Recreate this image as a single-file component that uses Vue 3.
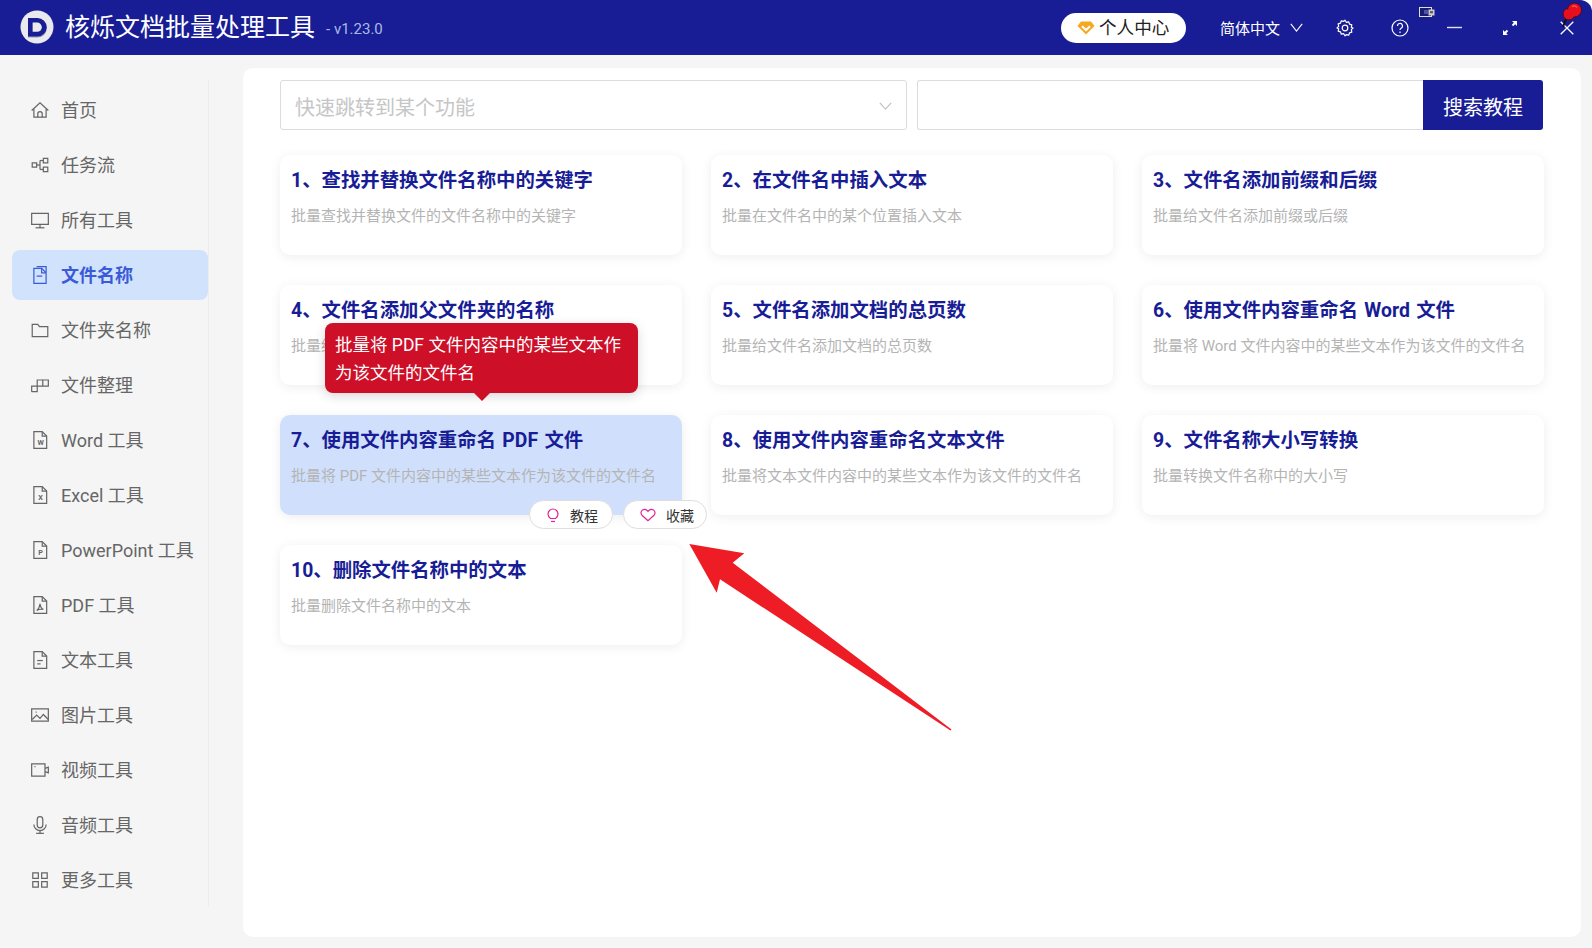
<template>
  <div class="app">
    <header class="topbar">
      <div class="logo">
        <svg viewBox="0 0 34 34" width="34" height="34">
          <circle cx="17" cy="17" r="16.500" fill="#e9e9ee" />
          <path d="M8 8h9.500a9.200 9.200 0 0 1 0 18.400H8z" fill="#9a9ab0" transform="translate(0 1.200)" />
          <path d="M8 8h9.500a9.200 9.200 0 0 1 0 18.400H8z" fill="#181d96" />
          <path d="M12.600 12.600h4.600a4.600 4.600 0 0 1 0 9.200h-4.600z" fill="#e9e9ee" />
        </svg>
      </div>
      <span class="app-name">核烁文档批量处理工具</span>
      <span class="version">- v1.23.0</span>

      <div class="topbar-right">
        <button class="user-btn">
          <svg viewBox="0 0 18 14" width="18" height="14">
            <path d="M4 .5h10L17.500 5 9 13.500.5 5z" fill="#f7a823" />
            <path d="M5 5.200 9 9l4-3.800" fill="none" stroke="#fff" stroke-width="2" />
          </svg>
          <span class="user-text">个人中心</span>
        </button>
        <span class="lang">简体中文</span>
        <svg class="lang-arrow" viewBox="0 0 13 9" width="13" height="9">
          <path d="M.8.8 6.500 8 12.200.8" fill="none" stroke="#fff" stroke-width="1.100" />
        </svg>
        <svg class="tool-icon gear" viewBox="0 0 18 18" width="18" height="18" fill="none" stroke="#fff" stroke-width="1.200">
          <path d="M9 1.200l1.300 2.100 2.400-.5.8 2.300 2.300.8-.5 2.400L17 9l-1.700 1.700.5 2.400-2.300.8-.8 2.300-2.400-.5L9 16.800l-1.300-2.100-2.400.5-.8-2.300-2.300-.8.5-2.400L1 9l1.700-1.700-.5-2.400 2.300-.8.8-2.300 2.400.5z" stroke-linejoin="round" />
          <circle cx="9" cy="9" r="2.800" />
        </svg>
        <svg class="tool-icon help" viewBox="0 0 18 18" width="18" height="18" fill="none" stroke="#fff" stroke-width="1.200">
          <circle cx="9" cy="9" r="8" />
          <path d="M6.500 7a2.500 2.500 0 1 1 3.600 2.200c-.8.4-1.100.9-1.100 1.800" />
          <path d="M9 12.600v1.400" />
        </svg>
        <svg class="win-btn" viewBox="0 0 15 15" width="15" height="15">
          <path d="M0 7.500h15" stroke="#dfe2f5" stroke-width="1.400" />
        </svg>
        <svg class="win-btn expand" viewBox="0 0 14 14" width="14" height="14" fill="#fff">
          <path d="M9 0h5v5l-1.800-1.800-2 2-1.400-1.400 2-2zM5 14H0V9l1.800 1.800 2-2 1.400 1.400-2 2z" />
        </svg>
        <svg class="win-btn close" viewBox="0 0 14 14" width="14" height="14">
          <path d="M.7.7l12.600 12.600M13.300.7.7 13.300" stroke="#fff" stroke-width="1.300" />
        </svg>
      </div>

      <svg class="mini-window" viewBox="0 0 16 10" width="16" height="10">
        <rect x=".5" y=".5" width="12" height="9" fill="#181d70" stroke="#ddd" />
        <path d="M6 3v4M8 3v4" stroke="#8c8cc8" />
        <rect x="9.500" y="2.500" width="6" height="6" fill="#ccc" />
        <rect x="11" y="4.200" width="3" height="2" fill="#555" />
      </svg>
      <svg class="pin" viewBox="0 0 22 28" width="22" height="28">
        <path d="M5 17 2 25" stroke="#111" stroke-width="2" />
        <circle cx="8" cy="12" r="6" fill="#e5101f" stroke="#4a0a24" />
        <circle cx="13.500" cy="8" r="7" fill="#e5101f" stroke="#4a0a24" />
        <circle cx="8.500" cy="12" r="5" fill="#e5101f" />
        <path d="M11 4.500c2-1 4-.5 5 1" fill="none" stroke="#ff5a64" stroke-width="1.200" />
      </svg>
    </header>

    <div class="body">
      <aside class="sidebar">
        <nav class="side-list">
          <a
            v-for="item in menu"
            :key="item.name"
            class="side-item"
            :class="{ active: item.active }"
          >
            <svg class="side-icon" viewBox="0 0 18 18" width="20" height="20" fill="none" stroke="currentColor" stroke-width="1.100">
              <path v-for="d in icons[item.icon]" :key="d" :d="d" />
              <text v-if="item.letter" x="9.500" y="13.700" class="icon-letter">{{ item.letter }}</text>
            </svg>
            <span class="side-name">{{ item.name }}</span>
          </a>
        </nav>
      </aside>

      <main class="panel">
        <div class="search-row">
          <div class="jump-select">
            <span>快速跳转到某个功能</span>
            <svg viewBox="0 0 13 8" width="13" height="8">
              <path d="M.8.8 6.500 7 12.200.8" fill="none" stroke="#bbb" stroke-width="1.100" />
            </svg>
          </div>
          <input class="search-input" />
          <button class="search-btn"><span>搜索教程</span></button>
        </div>

        <div class="card-grid">
          <div
            v-for="(card, idx) in cards"
            :key="card.title"
            class="card"
            :class="{ hovered: idx === hoverIndex }"
          >
            <div class="card-title">{{ idx + 1 }}、{{ card.title }}</div>
            <div v-if="idx !== 3" class="card-desc">{{ card.desc }}</div>
            <div v-else class="card-desc cut">{{ card.desc }}</div>

            <template v-if="idx === hoverIndex">
              <div class="tooltip">{{ card.desc }}</div>
              <div class="card-actions">
                <button class="action-btn">
                  <svg viewBox="0 0 14 16" width="14" height="16" fill="none" stroke="#e0278f" stroke-width="1.200">
                    <path d="M4.500 11.500C3 10.500 2 9 2 7a5 5 0 0 1 10 0c0 2-1 3.500-2.500 4.500z" />
                    <path d="M5 14.500h4" />
                  </svg>
                  教程
                </button>
                <button class="action-btn">
                  <svg viewBox="0 0 16 14" width="16" height="14" fill="none" stroke="#e0278f" stroke-width="1.200">
                    <path d="M8 12.800 2 7.200C.4 5.600.8 3 2.600 2 4.400 1 6.600 1.500 8 3.400 9.400 1.500 11.600 1 13.400 2c1.800 1 2.200 3.600.6 5.200z" />
                  </svg>
                  收藏
                </button>
              </div>
            </template>
          </div>
        </div>
      </main>
    </div>

    <svg class="big-arrow" viewBox="0 0 1592 948" width="1592" height="948">
      <path d="M689.300 544 744.300 553.300 732.700 562.700 951.500 729.500 950.500 730.500 720 579.300 716.700 592.700z" fill="#ee1c25" />
    </svg>
  </div>
</template>

<script setup>
import { ref } from 'vue'

const hoverIndex = ref(6)

const fileOutline = ['M3.500 1.500h7.500l4 4v11h-11.500z', 'M11 1.500v4h4']

const icons = {
  home: ['M1.500 9.500 9 2.500l7.500 7', 'M3.500 8v7.500h11V8', 'M7 15.500V12.500a2 2 0 0 1 4 0v3'],
  flow: ['M2 7h4v4H2z', 'M12 3h4v4h-4z', 'M12 11h4v4h-4z', 'M6 9h3', 'M9 5v8', 'M9 5h3', 'M9 13h3'],
  monitor: ['M1.500 3h15v10h-15z', 'M9 13v3', 'M5 16h8'],
  filename: ['M3.500 3h7l4 4v9.500h-11z', 'M6 1.500h8.500v5', 'M10.500 3v4h4', 'M6 10h5'],
  folder: ['M2 4h5l1.500 2H16v9H2z'],
  arrange: ['M1.500 15v-5h10V4.500h5V10h-5', 'M6.500 10v5h-5', 'M6.500 10V4.500h5'],
  doc: fileOutline,
  pdf: [...fileOutline, 'M6 14c1.500-1 2.500-3 3-6 .5 3 1.500 4.500 3 5-2-.4-4-.2-6 1z'],
  text: [...fileOutline, 'M6.500 9.500h5', 'M6.500 12.500h3'],
  image: ['M1.500 3.500h15v11h-15z', 'M2 13l4-4 3 3 3-3.500 4.500 4.500', 'M5 6.500h1'],
  video: ['M1.500 3.500h12v11h-12z', 'M13.500 7.500l3-1v5l-3-1', 'M4 6h1'],
  mic: ['M6.500 4a2.500 2.500 0 0 1 5 0v5a2.500 2.500 0 0 1-5 0z', 'M3.500 8.500a5.500 5.500 0 0 0 11 0', 'M9 14v2.500', 'M5.500 16.500h7'],
  grid: ['M2.500 2.500h5v5h-5z', 'M10.500 2.500h5v5h-5z', 'M2.500 10.500h5v5h-5z', 'M10.500 10.500h5v5h-5z']
}

const menu = [
  { name: '首页', icon: 'home' },
  { name: '任务流', icon: 'flow' },
  { name: '所有工具', icon: 'monitor' },
  { name: '文件名称', icon: 'filename', active: true },
  { name: '文件夹名称', icon: 'folder' },
  { name: '文件整理', icon: 'arrange' },
  { name: 'Word 工具', icon: 'doc', letter: 'W' },
  { name: 'Excel 工具', icon: 'doc', letter: 'X' },
  { name: 'PowerPoint 工具', icon: 'doc', letter: 'P' },
  { name: 'PDF 工具', icon: 'pdf' },
  { name: '文本工具', icon: 'text' },
  { name: '图片工具', icon: 'image' },
  { name: '视频工具', icon: 'video' },
  { name: '音频工具', icon: 'mic' },
  { name: '更多工具', icon: 'grid' }
]

const cards = [
  { title: '查找并替换文件名称中的关键字', desc: '批量查找并替换文件的文件名称中的关键字' },
  { title: '在文件名中插入文本', desc: '批量在文件名中的某个位置插入文本' },
  { title: '文件名添加前缀和后缀', desc: '批量给文件名添加前缀或后缀' },
  { title: '文件名添加父文件夹的名称', desc: '批量给文件名添加父文件夹的名称' },
  { title: '文件名添加文档的总页数', desc: '批量给文件名添加文档的总页数' },
  { title: '使用文件内容重命名 Word 文件', desc: '批量将 Word 文件内容中的某些文本作为该文件的文件名' },
  { title: '使用文件内容重命名 PDF 文件', desc: '批量将 PDF 文件内容中的某些文本作为该文件的文件名' },
  { title: '使用文件内容重命名文本文件', desc: '批量将文本文件内容中的某些文本作为该文件的文件名' },
  { title: '文件名称大小写转换', desc: '批量转换文件名称中的大小写' },
  { title: '删除文件名称中的文本', desc: '批量删除文件名称中的文本' }
]
</script>

<style>
html,
body {
  margin: 0;
  overflow: hidden;
  background: #fff;
}
</style>

<style scoped>
.app {
  position: relative;
  width: 1592px;
  height: 948px;
  display: flex;
  flex-direction: column;
  overflow: hidden;
  border-top-right-radius: 12px;
  background: #f5f5f5;
  font-family: Roboto, "Noto Sans CJK SC", sans-serif;
}

.topbar {
  position: relative;
  height: 55px;
  flex: none;
  display: flex;
  align-items: center;
  padding-left: 20px;
  background: #181d96;
  color: #fff;
}

.logo {
  width: 34px;
  height: 34px;
  margin-top: -1px;
}

.app-name {
  margin-left: 11px;
  font-size: 25px;
  line-height: 1;
}

.version {
  margin-left: 11px;
  margin-top: 3px;
  font-size: 15px;
  color: #a9bbe2;
}

.topbar-right {
  margin-left: auto;
  display: flex;
  align-items: center;
  padding-right: 18px;
}

.user-btn {
  width: 125px;
  height: 30px;
  margin-right: 34px;
  padding: 0 0 0 16px;
  display: flex;
  align-items: center;
  gap: 4px;
  border: none;
  border-radius: 15px;
  background: #fff;
  color: #222;
  font-family: inherit;
  font-size: 17.6px;
}

.user-text {
  position: relative;
  top: -1px;
}

.lang {
  font-size: 15px;
}

.lang-arrow {
  margin-left: 10px;
}

.tool-icon.gear {
  margin-left: 33px;
}

.tool-icon.help {
  margin-left: 37px;
}

.win-btn {
  margin-left: 38px;
}

.win-btn.expand {
  margin-left: 41px;
}

.win-btn.close {
  margin-left: 43px;
}

.mini-window {
  position: absolute;
  left: 1419px;
  top: 7px;
}

.pin {
  position: absolute;
  left: 1561px;
  top: 2px;
}

.body {
  flex: 1;
  display: flex;
  min-height: 0;
}

.sidebar {
  width: 243px;
  flex: none;
  padding-top: 25px;
  box-sizing: border-box;
}

.side-list {
  width: 209px;
  height: 827px;
  padding: 5px 0 0 12px;
  box-sizing: border-box;
  border-right: 1px solid #ececec;
}

.side-item {
  height: 50px;
  margin-bottom: 5px;
  padding-left: 18px;
  display: flex;
  align-items: center;
  gap: 11px;
  border-radius: 8px;
  color: #666;
  font-size: 18px;
}

.side-name {
  position: relative;
  top: -1px;
}

.side-item.active {
  background: #d1e2fd;
  color: #3b5bd6;
  font-weight: 700;
}

.side-icon {
  flex: none;
}

.icon-letter {
  font-size: 6.500px;
  font-weight: 700;
  text-anchor: middle;
  fill: currentColor;
  stroke: none;
}

.panel {
  width: 1338px;
  height: 869px;
  margin-top: 13px;
  padding: 12px 38px 0 37px;
  box-sizing: border-box;
  background: #fff;
  border-radius: 10px;
}

.search-row {
  display: flex;
  height: 50px;
}

.jump-select {
  width: 627px;
  margin-right: 10px;
  padding: 2px 14px 0 14px;
  box-sizing: border-box;
  display: flex;
  align-items: center;
  justify-content: space-between;
  border: 1px solid #dcdcdc;
  border-radius: 3px;
  color: #c6c6c6;
  font-size: 20px;
}

.search-input {
  flex: 1;
  min-width: 0;
  box-sizing: border-box;
  border: 1px solid #dcdcdc;
  border-right: none;
  border-radius: 3px 0 0 3px;
  outline: none;
}

.search-btn {
  width: 120px;
  padding: 2px 0 0;
  border: none;
  border-radius: 0 3px 3px 0;
  background: #181d96;
  color: #fff;
  font-family: inherit;
  font-size: 20px;
}

.card-grid {
  width: 1264px;
  margin-top: 25px;
  display: grid;
  grid-template-columns: repeat(3, 402px);
  grid-auto-rows: 100px;
  gap: 30px 29px;
}

.card {
  position: relative;
  padding: 12px 11px 0;
  box-sizing: border-box;
  background: #fff;
  border-radius: 10px;
  box-shadow: 0 2px 12px rgba(0, 0, 0, 0.07);
}

.card.hovered {
  background: #d0e0fc;
}

.card-title {
  line-height: 28px;
  color: #181d96;
  font-size: 19.400px;
  font-weight: 700;
  word-spacing: 1.500px;
}

.card-desc {
  margin-top: 10px;
  line-height: 22px;
  color: #b4b4b4;
  font-size: 15px;
  white-space: nowrap;
}

.card-desc.cut {
  width: 34px;
  overflow: hidden;
}

.tooltip {
  position: absolute;
  left: 45px;
  bottom: calc(100% + 22px);
  width: 313px;
  height: 70px;
  padding: 8px 10px;
  box-sizing: border-box;
  border-radius: 8px;
  background: #ce0f28;
  box-shadow: 0 3px 12px rgba(0, 0, 0, 0.15);
  color: #fff;
  font-size: 17.500px;
  line-height: 28px;
}

.tooltip::after {
  content: "";
  position: absolute;
  left: 50%;
  bottom: -8px;
  margin-left: -9px;
  border-left: 9px solid transparent;
  border-right: 9px solid transparent;
  border-top: 9px solid #ce0f28;
}

.card-actions {
  position: absolute;
  right: -25px;
  bottom: -14px;
  display: flex;
  gap: 10px;
}

.action-btn {
  width: 84px;
  height: 29px;
  padding: 0 0 0 16px;
  display: flex;
  align-items: center;
  gap: 10px;
  box-sizing: border-box;
  border: 1px solid #dedede;
  border-radius: 15px;
  background: #fff;
  color: #333;
  font-family: inherit;
  font-size: 14px;
}

.big-arrow {
  position: absolute;
  left: 0;
  top: 0;
  pointer-events: none;
}
</style>
